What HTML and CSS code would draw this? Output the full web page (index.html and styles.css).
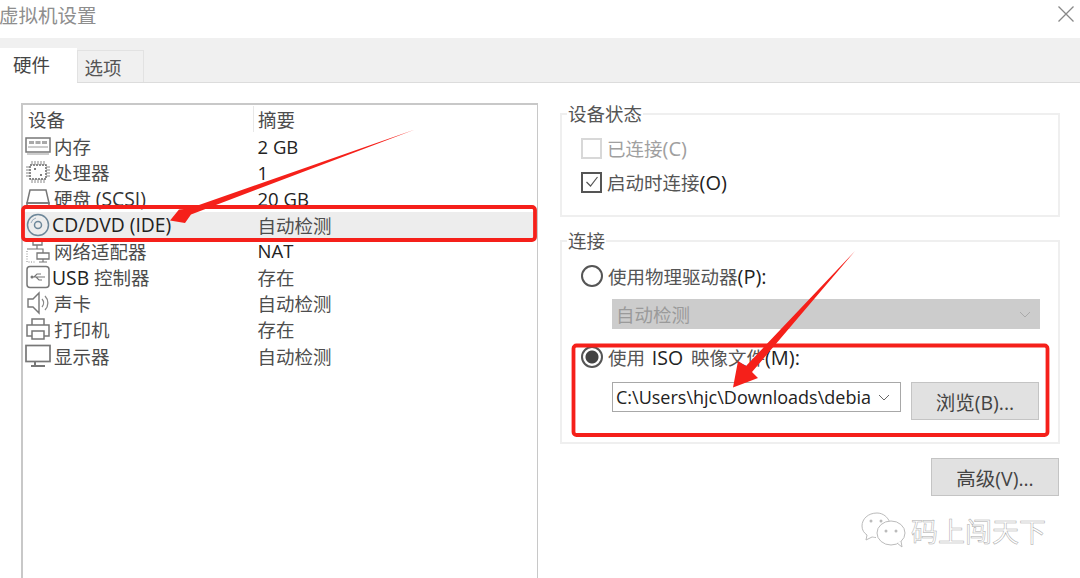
FILE: index.html
```html
<!DOCTYPE html>
<html lang="zh">
<head>
<meta charset="utf-8">
<title>虚拟机设置</title>
<link rel="stylesheet" href="styles.css">
</head>
<body>
<div class="dialog">
  <header class="titlebar">
    <span class="title">虚拟机设置</span>
    <svg class="close" width="16" height="16" viewBox="0 0 16 16"><path d="M0.500 0.500L15.500 15.500M15.500 0.500L0.500 15.500" stroke="#888" stroke-width="1.300" fill="none"/></svg>
  </header>
  <nav class="tabs">
    <div class="tab active">硬件</div>
    <div class="tab">选项</div>
  </nav>
  <main class="content">
    <section class="list">
      <div class="list-head"><span class="c1">设备</span><span class="c2">摘要</span></div>
      <div class="row"><span class="c1"><svg class="ic" viewBox="0 0 26 20"><rect x="1" y="2" width="24" height="14" fill="none" stroke="#777" stroke-width="1.500"/><path d="M4 5h5v3H4zM10.500 5h5v3h-5zM17 5h5v3h-5z" fill="#aaa"/><path d="M3 11h20M2 18h22" stroke="#999"/></svg>内存</span><span class="c2">2 GB</span></div>
      <div class="row"><span class="c1"><svg class="ic" viewBox="0 0 26 24"><rect x="5" y="5" width="16" height="14" fill="none" stroke="#666" stroke-width="1.500" stroke-dasharray="2 1"/><path d="M7 1v4M10 1v4M13 1v4M16 1v4M19 1v4M7 19v4M10 19v4M13 19v4M16 19v4M19 19v4M1 7h4M1 10h4M1 13h4M1 16h4M21 7h4M21 10h4M21 13h4M21 16h4" stroke="#888"/><path d="M9 9h2M15 15h2" stroke="#555" stroke-width="1.500"/></svg>处理器</span><span class="c2">1</span></div>
      <div class="row"><span class="c1"><svg class="ic" viewBox="0 0 26 22"><path d="M5 3h16l3 13H2z" fill="none" stroke="#777" stroke-width="1.500"/><path d="M2 16h22v4H2z" fill="none" stroke="#777" stroke-width="1.500"/></svg>硬盘 <b class="scsi">(SCSI)</b></span><span class="c2">20 GB</span></div>
      <div class="row selected"><span class="c1"><svg class="ic" viewBox="0 0 26 24"><circle cx="13" cy="12" r="10.500" fill="none" stroke="#6d8799" stroke-width="1.500"/><circle cx="13" cy="12" r="3.500" fill="none" stroke="#6d8799" stroke-width="1.500"/><path d="M6 10a7 7 0 0 1 5-5" fill="none" stroke="#9ab" stroke-width="1"/></svg><b class="wide">CD/DVD (IDE)</b></span><span class="c2">自动检测</span></div>
      <div class="row"><span class="c1"><svg class="ic" viewBox="0 0 26 24"><path d="M8 1h9v5H8zM12 14h12v6H12z" fill="none" stroke="#777" stroke-width="1.300"/><path d="M12 6v4M2 10h16v4M18 20v3M14 23h8" fill="none" stroke="#777" stroke-width="1.200"/><path d="M2 12v11h8" fill="none" stroke="#888" stroke-dasharray="1 1.500"/></svg>网络适配器</span><span class="c2 dark">NAT</span></div>
      <div class="row"><span class="c1"><svg class="ic" viewBox="0 0 26 24"><rect x="2" y="1.500" width="22" height="21" rx="3" fill="none" stroke="#777" stroke-width="1.500"/><path d="M6 12h14M9 12l3-3h4M11 12l3 3h3" fill="none" stroke="#777" stroke-width="1.100"/><circle cx="7" cy="12" r="1.500" fill="#777"/></svg><b class="wide">USB</b> 控制器</span><span class="c2">存在</span></div>
      <div class="row"><span class="c1"><svg class="ic" viewBox="0 0 26 24"><path d="M3 8h5l6-6v20l-6-6H3z" fill="none" stroke="#777" stroke-width="1.400"/><path d="M17 8a6 6 0 0 1 0 8M20 5a10 10 0 0 1 0 14" fill="none" stroke="#888" stroke-width="1.300"/></svg>声卡</span><span class="c2">自动检测</span></div>
      <div class="row"><span class="c1"><svg class="ic" viewBox="0 0 26 24"><path d="M7 8V2h12v6M7 19H2V8h22v11h-5" fill="none" stroke="#777" stroke-width="1.500"/><path d="M7 14h12v8H7z" fill="none" stroke="#777" stroke-width="1.500"/></svg>打印机</span><span class="c2">存在</span></div>
      <div class="row"><span class="c1"><svg class="ic" viewBox="0 0 26 24"><rect x="1" y="1.500" width="24" height="16" fill="none" stroke="#777" stroke-width="1.700"/><path d="M10 18v3M6 22h14" stroke="#777" stroke-width="2"/></svg>显示器</span><span class="c2">自动检测</span></div>
    </section>
    <aside class="side">
      <fieldset class="group status">
        <legend>设备状态</legend>
        <label class="opt disabled"><span class="check"></span>已连接<span class="key">(C)</span></label>
        <label class="opt"><span class="check on"><svg width="16" height="16" viewBox="0 0 16 16"><path d="M2.500 8l4 4 7-9" fill="none" stroke="#555" stroke-width="1.200"/></svg></span>启动时连接<b class="key">(O)</b></label>
      </fieldset>
      <fieldset class="group conn">
        <legend>连接</legend>
        <label class="opt"><span class="radio"></span>使用物理驱动器<b class="key">(P):</b></label>
        <div class="select off"><span>自动检测</span><svg width="12" height="7" viewBox="0 0 12 7"><path d="M1 1l5 5 5-5" fill="none" stroke="#aaa"/></svg></div>
        <label class="opt iso"><span class="radio on"></span>使用 <b class="iso-name">ISO</b> 映像文件<b class="key">(M):</b></label>
        <div class="file-row">
          <div class="select path"><span>C:\Users\hjc\Downloads\debia</span><svg width="12" height="7" viewBox="0 0 12 7"><path d="M1 1l5 5 5-5" fill="none" stroke="#666"/></svg></div>
          <button class="btn browse">浏览(B)...</button>
        </div>
      </fieldset>
      <div class="actions"><button class="btn adv">高级(V)...</button></div>
    </aside>
  </main>
  <svg class="marks" width="1080" height="578" viewBox="0 0 1080 578">
    <rect x="23" y="207" width="512" height="33" rx="3" fill="none" stroke="#f5201a" stroke-width="3.800"/>
    <rect x="573.500" y="345.500" width="474" height="89.500" rx="3" fill="none" stroke="#f5201a" stroke-width="3.800"/>
    <path d="M415 129.500L189 208.500L179 209.500L170 220.500L185 223L191 214.500Z" fill="#f5201a"/>
    <path d="M855 251L746 366L738 361L733 387.500L758 378L752 372Z" fill="#f5201a"/>
  </svg>
  <div class="watermark">
    <svg width="46" height="40" viewBox="0 0 46 40"><path d="M17 3C8 3 2 9 2 16c0 4 2 7 5 9l-1 5 6-3c1 0 2 .5 4 .5M30 13C28 7 23 3 17 3" fill="rgba(255,255,255,.8)" stroke="#bbb"/><ellipse cx="31" cy="23" rx="14" ry="12" fill="#fff" stroke="#bbb"/><path d="M37 33l5 4-1-6" fill="#fff" stroke="#bbb"/><circle cx="11" cy="11" r="1.500" fill="#bbb"/><circle cx="21" cy="11" r="1.500" fill="#bbb"/><circle cx="26" cy="21" r="1.500" fill="#bbb"/><circle cx="36" cy="21" r="1.500" fill="#bbb"/></svg>
    <span>码上闯天下</span>
  </div>
</div>
</body>
</html>
```

FILE: styles.css
```css
* { box-sizing: border-box; }
html, body { margin: 0; padding: 0; background: #fff; }
body { width: 1080px; height: 578px; overflow: hidden; font-family: "Open Sans", "Noto Sans CJK SC", sans-serif; font-size: 18.500px; color: #4c4c4c; }
.dialog { position: relative; width: 1080px; height: 578px; display: flex; flex-direction: column; overflow: hidden; }
.titlebar { height: 38px; display: flex; align-items: center; justify-content: space-between; padding: 0 6px 0 0; flex: none; }
.title { font-size: 19.500px; color: #8e8e8e; margin-left: -1px; margin-top: -9px; }
.close { margin-top: -10px; }
.tabs { height: 45px; flex: none; background: #f0f0f0; border-bottom: 1px solid #dcdcdc; display: flex; align-items: flex-end; }
.tab { width: 67px; height: 32px; background: #f0f0f0; border: 1px solid #e2e2e2; border-bottom: 0; display: flex; align-items: center; justify-content: center; padding-right: 15px; color: #555; }
.tab.active { width: 77px; height: 35px; background: #fff; border: 0; margin-bottom: -1px; padding-bottom: 4px; padding-right: 14px; position: relative; color: #444; }
.content { flex: 1; display: flex; align-items: flex-start; padding: 20px 20px 0 21px; gap: 22px; min-height: 0; }
.list { width: 517px; height: 480px; flex: none; border-style: solid; border-color: #c8c8c8; border-width: 2px 1.500px 0 2.500px; padding: 0; display: flex; flex-direction: column; }
.list-head { height: 28px; display: flex; align-items: center; flex: none; }
.row { height: 26.200px; display: flex; align-items: center; flex: none; }
.c1 { width: 230px; flex: none; padding-left: 2px; display: flex; align-items: center; white-space: pre; }
.list-head .c1 { padding-left: 5px; }
.list-head .c2 { border-left: 1px solid #e8e8e8; height: 26px; display: flex; align-items: center; padding-left: 4px; }
.c2 { padding-left: 4.500px; color: #4d4d4d; }
.row b, .opt b { font-weight: 400; color: #222; }
.row b.wide { font-size: 19.300px; margin-left: -2px; }
.row b.scsi { font-size: 19.300px; color: #333; }
.row:nth-child(2) .c2, .row:nth-child(3) .c2, .row:nth-child(4) .c2, .dark { color: #222; }
.selected { background: #ededed; }
.ic { width: 26px; height: 24px; flex: none; margin-right: 3px; }
.side { width: 500px; flex: none; display: flex; flex-direction: column; margin-top: 2px; }
.group { margin: 0; padding: 0; border: 2px solid #efefef; min-width: 0; }
.group legend { margin-left: -14px; padding: 0 1px; line-height: 18px; color: #555; }
.status { height: 112px; padding: 8px 0 0 19px; }
.conn { height: 212px; margin-top: 15px; padding: 9px 0 0 19px; }
.opt { display: flex; align-items: center; height: 34px; white-space: pre; color: #555; }
.key { font-size: 20px; }
.opt .iso-name { font-size: 19.500px; margin: 0 3px 0 2px; }
.disabled { color: #a0a0a0; }
.check { width: 21px; height: 21px; border: 2px solid #d8d8d8; margin-right: 5px; flex: none; display: flex; align-items: center; justify-content: center; }
.check.on { border-color: #555; }
.radio { width: 22px; height: 22px; border-radius: 50%; border: 2px solid #555; margin-right: 5px; flex: none; background: #fff; }
.radio.on { background: radial-gradient(circle, #444 0, #444 6px, #fff 7px); }
.select { display: flex; align-items: center; justify-content: space-between; height: 30px; margin-left: 31px; padding: 0 9px 0 4px; }
.select.off { width: 428px; background: #cccccc; color: #9a9a9a; margin-top: 6px; }
.iso { margin-top: 12px; height: 32px; }
.file-row { display: flex; align-items: flex-start; margin-left: 31px; margin-top: 9px; gap: 10px; }
.select.path { width: 289px; margin-left: 0; border: 1px solid #a8a8a8; background: #fff; color: #222; padding: 0 10px 0 3px; flex: none; font-size: 18px; }
.btn { font-family: inherit; font-size: 19.500px; color: #444; background: #e1e1e1; border: 1px solid #c4c4c4; padding: 0; }
.browse { width: 128px; height: 38px; }
.actions { display: flex; justify-content: flex-end; padding: 14px 1px 0 0; }
.adv { width: 128px; height: 38px; }
.marks { position: absolute; left: 0; top: 0; pointer-events: none; }
.watermark { position: absolute; left: 860px; top: 510px; display: flex; align-items: center; gap: 5px; font-size: 27px; color: #fff; -webkit-text-stroke: 0.500px #aaa; }
```
